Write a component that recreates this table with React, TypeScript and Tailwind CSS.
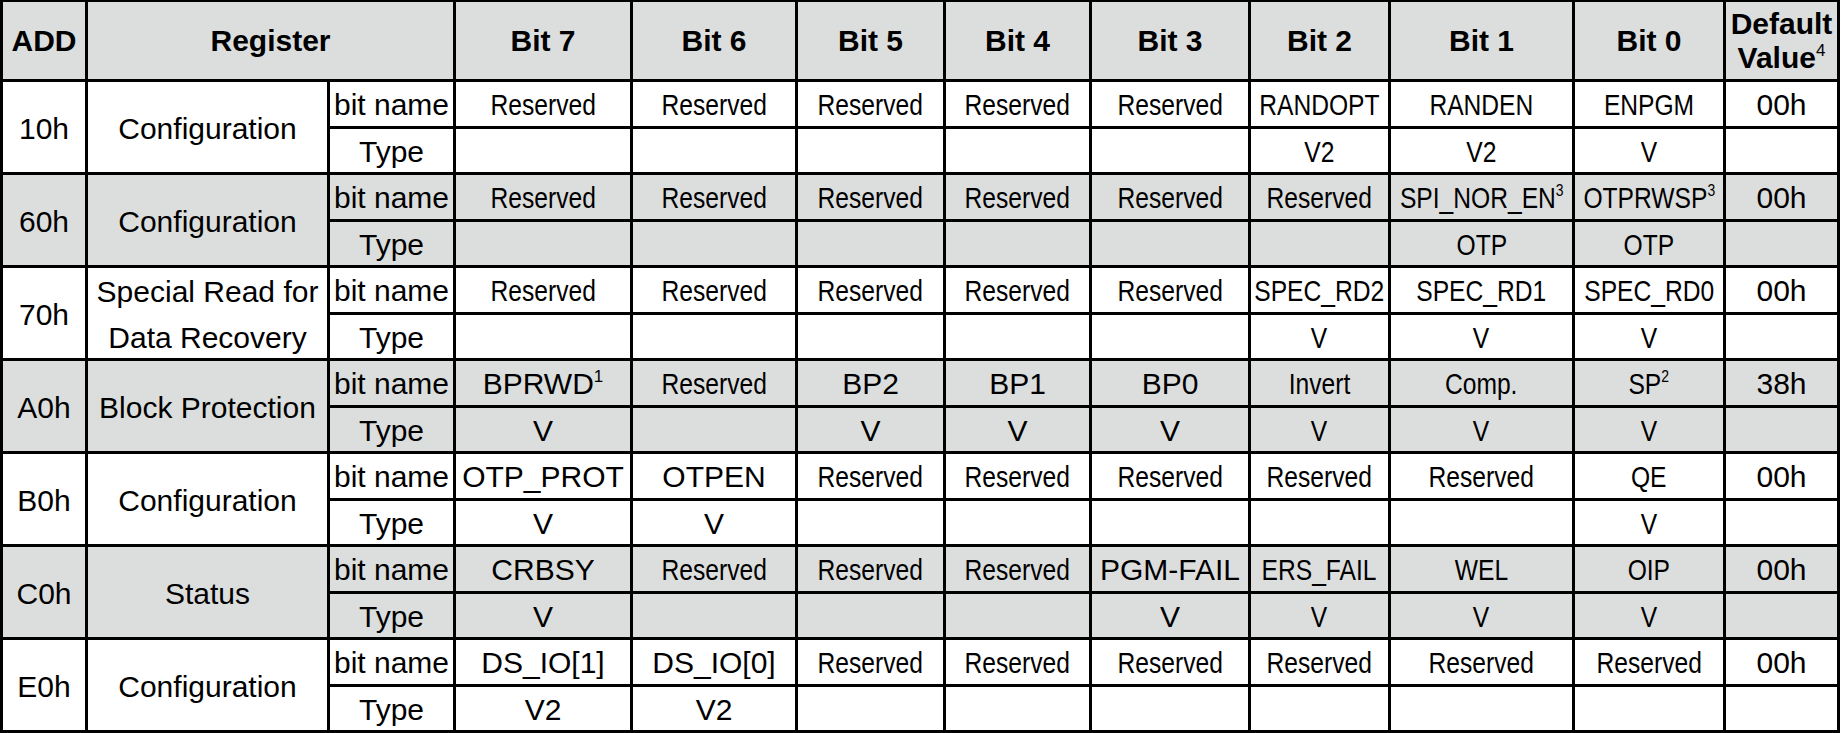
import React from 'react';

type Group = {
  add: string;
  name: string[];
  bits: string[];
  types: string[];
  // true = bit set in regular width, false = narrow face
  wide: boolean[];
  def: string;
  gray: boolean;
};

const R = 'Reserved';

const groups: Group[] = [
  {
    add: '10h',
    name: ['Configuration'],
    bits: [R, R, R, R, R, 'RANDOPT', 'RANDEN', 'ENPGM'],
    types: ['', '', '', '', '', 'V2', 'V2', 'V'],
    wide: [false, false, false, false, false, false, false, false],
    def: '00h',
    gray: false,
  },
  {
    add: '60h',
    name: ['Configuration'],
    bits: [R, R, R, R, R, R, 'SPI_NOR_EN^3', 'OTPRWSP^3'],
    types: ['', '', '', '', '', '', 'OTP', 'OTP'],
    wide: [false, false, false, false, false, false, false, false],
    def: '00h',
    gray: true,
  },
  {
    add: '70h',
    name: ['Special Read for', 'Data Recovery'],
    bits: [R, R, R, R, R, 'SPEC_RD2', 'SPEC_RD1', 'SPEC_RD0'],
    types: ['', '', '', '', '', 'V', 'V', 'V'],
    wide: [false, false, false, false, false, false, false, false],
    def: '00h',
    gray: false,
  },
  {
    add: 'A0h',
    name: ['Block Protection'],
    bits: ['BPRWD^1', R, 'BP2', 'BP1', 'BP0', 'Invert', 'Comp.', 'SP^2'],
    types: ['V', '', 'V', 'V', 'V', 'V', 'V', 'V'],
    wide: [true, false, true, true, true, false, false, false],
    def: '38h',
    gray: true,
  },
  {
    add: 'B0h',
    name: ['Configuration'],
    bits: ['OTP_PROT', 'OTPEN', R, R, R, R, R, 'QE'],
    types: ['V', 'V', '', '', '', '', '', 'V'],
    wide: [true, true, false, false, false, false, false, false],
    def: '00h',
    gray: false,
  },
  {
    add: 'C0h',
    name: ['Status'],
    bits: ['CRBSY', R, R, R, 'PGM-FAIL', 'ERS_FAIL', 'WEL', 'OIP'],
    types: ['V', '', '', '', 'V', 'V', 'V', 'V'],
    wide: [true, false, false, false, true, false, false, false],
    def: '00h',
    gray: true,
  },
  {
    add: 'E0h',
    name: ['Configuration'],
    bits: ['DS_IO[1]', 'DS_IO[0]', R, R, R, R, R, R],
    types: ['V2', 'V2', '', '', '', '', '', ''],
    wide: [true, true, false, false, false, false, false, false],
    def: '00h',
    gray: false,
  },
];

function Cell({
  gray,
  className,
  children,
}: {
  gray: boolean;
  className?: string;
  children?: React.ReactNode;
}) {
  return (
    <div
      className={`flex items-center justify-center whitespace-nowrap text-center ${
        gray ? 'bg-[#dcdedd]' : 'bg-white'
      } ${className ?? ''}`}
    >
      {children}
    </div>
  );
}

// "TEXT^n" -> TEXT with superscript n
function Label({ value, wide }: { value: string; wide: boolean }) {
  if (!value) return null;
  const [main, sup] = value.split('^');
  return (
    <span className={`inline-block ${wide ? '' : 'scale-x-[0.82]'}`}>
      {main}
      {sup && <sup className="-top-[0.7em] text-[17px]">{sup}</sup>}
    </span>
  );
}

export default function App() {
  const headBits = ['Bit 7', 'Bit 6', 'Bit 5', 'Bit 4', 'Bit 3', 'Bit 2', 'Bit 1', 'Bit 0'];

  return (
    <main className="min-h-screen bg-white">
      <div
        className="grid w-fit grid-cols-[82px_239px_123px_174px_162px_145px_143px_156px_137px_181px_148px_111px] grid-rows-[77px_repeat(7,44px_43px)] gap-[3px] bg-black px-[3px] pt-[2px] pb-[3px] text-[30px] leading-none text-black"
        style={{ fontFamily: '"Liberation Sans", Arial, sans-serif' }}
      >
        {/* header */}
        <Cell gray className="font-bold">ADD</Cell>
        <Cell gray className="col-span-2 font-bold">Register</Cell>
        {headBits.map((b) => (
          <Cell key={b} gray className="font-bold">
            {b}
          </Cell>
        ))}
        <Cell gray className="font-bold leading-[34px]">
          <div>
            Default
            <br />
            Value<sup className="-top-[0.7em] text-[17px] font-normal">4</sup>
          </div>
        </Cell>

        {groups.map((g) => (
          <React.Fragment key={g.add}>
            <Cell gray={g.gray} className="row-span-2 pt-[3px]">
              {g.add}
            </Cell>
            <Cell gray={g.gray} className="row-span-2 pt-[4px] leading-[46px]">
              <div>
                {g.name.map((line, i) => (
                  <div key={i}>{line}</div>
                ))}
              </div>
            </Cell>
            <Cell gray={g.gray} className="pt-[2px]">bit name</Cell>
            {g.bits.map((b, i) => (
              <Cell key={'b' + i} gray={g.gray} className="pt-[2px]">
                <Label value={b} wide={g.wide[i]} />
              </Cell>
            ))}
            <Cell gray={g.gray} className="pt-[2px]">{g.def}</Cell>

            <Cell gray={g.gray} className="pt-[2px]">Type</Cell>
            {g.types.map((t, i) => (
              <Cell key={'t' + i} gray={g.gray} className="pt-[2px]">
                <Label value={t} wide={g.wide[i]} />
              </Cell>
            ))}
            <Cell gray={g.gray} />
          </React.Fragment>
        ))}
      </div>
    </main>
  );
}
